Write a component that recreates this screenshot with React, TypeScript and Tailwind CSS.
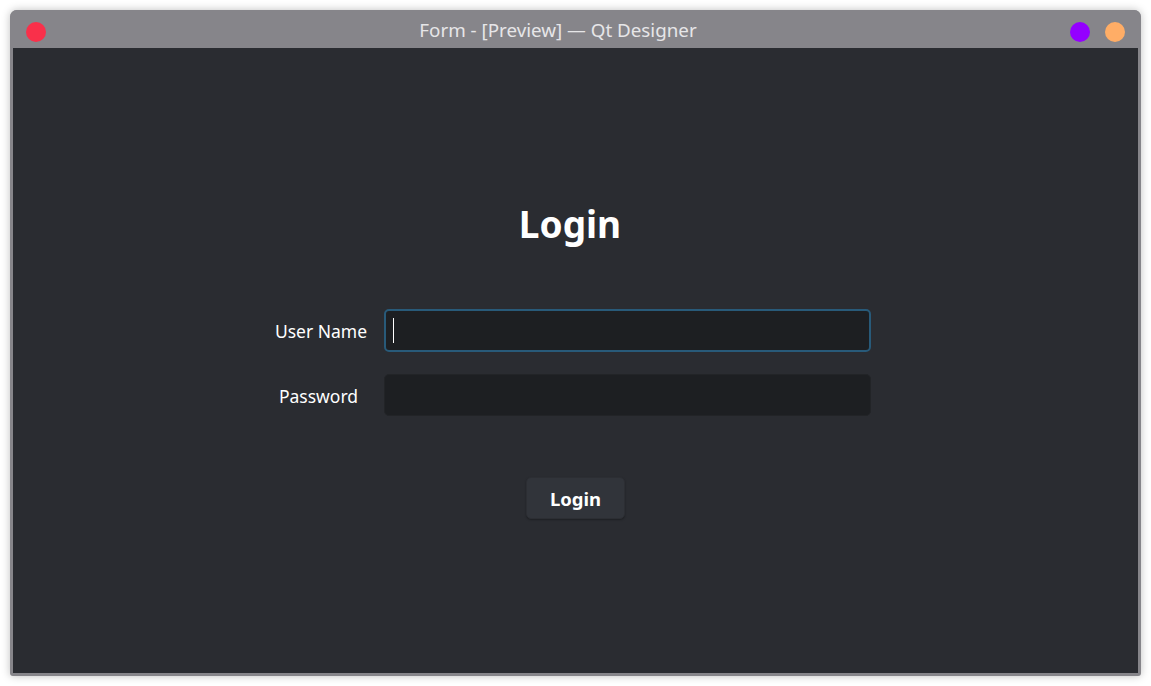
import React from 'react';

// Ventana de vista previa de Qt Designer con formulario de login

const font = { fontFamily: '"Noto Sans", "Open Sans", sans-serif' };

const TitleBar: React.FC = () => (
  <div className="relative flex h-[38px] items-center justify-center bg-[#86858a]">
    <span className="absolute left-[16px] top-[12px] h-[20px] w-[20px] rounded-full bg-[#f9304a]" />
    <span className="mt-[2px] pr-[35px] text-[18.8px] text-[#e6e6e8]">Form - [Preview] — Qt Designer</span>
    <div className="absolute right-[16px] top-[12px] flex gap-[15px]">
      <span className="h-[20px] w-[20px] rounded-full bg-[#9400ff]" />
      <span className="h-[20px] w-[20px] rounded-full bg-[#ffad66]" />
    </div>
  </div>
);

export default function App() {
  return (
    <div className="h-[686px] w-[1151px] bg-white p-[10px]" style={font}>
      <div className="flex h-[666px] w-[1131px] flex-col overflow-hidden rounded-t-[7px] rounded-b-[3px] bg-[#86858a] shadow-[0_0_8px_rgba(0,0,0,0.25)]">
        <TitleBar />
        <div className="mx-[3px] mb-[3px] flex flex-1 flex-col items-center bg-[#2a2c31] text-white">
          <h1 className="mr-[11px] mt-[151px] text-[37px] font-bold leading-[50px]">Login</h1>

          <div className="mr-[15px] mt-[60px] grid w-[606px] grid-cols-[119px_1fr] items-center gap-y-[22px]">
            <label className="pr-[7px] pt-[3px] text-center text-[17.5px] leading-none">User Name</label>
            <div className="flex h-[43px] items-center rounded-[5px] border-2 border-[#285a79] bg-[#1d1f22] pl-[7px]">
              <span className="h-[25px] w-[1px] bg-white" />
            </div>
            <label className="pr-[12px] pt-[3px] text-center text-[17.5px] leading-none">Password</label>
            <div className="h-[42px] rounded-[5px] border border-[#222427] bg-[#1d1f22]" />
          </div>

          <button className="mt-[61px] h-[42px] w-[99px] rounded-[5px] border border-[#2c2e33] bg-[#31343a] pt-[1px] text-[18.5px] font-bold shadow-[0_1px_2px_rgba(0,0,0,0.3)]">
            Login
          </button>
        </div>
      </div>
    </div>
  );
}
